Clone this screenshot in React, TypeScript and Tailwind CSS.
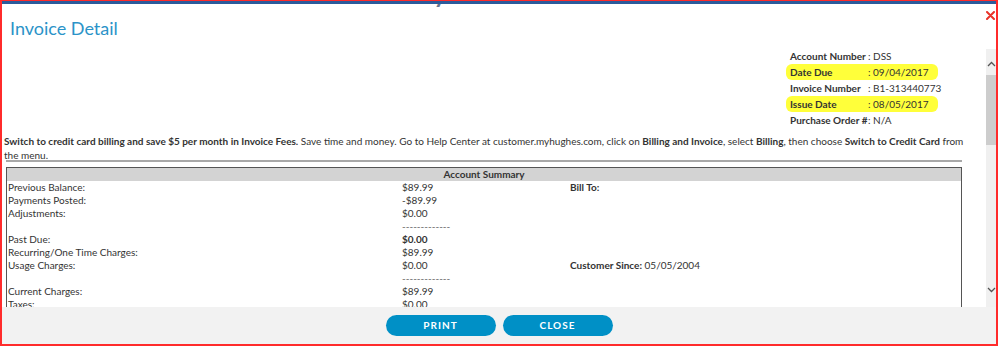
import React from "react";

const summaryRows = [
  { label: "Previous Balance:", value: "$89.99", extra: <span className="font-bold">Bill To:</span> },
  { label: "Payments Posted:", value: "-$89.99" },
  { label: "Adjustments:", value: "$0.00" },
  { label: "", value: "-------------", dash: true },
  { label: "Past Due:", value: "$0.00", bold: true },
  { label: "Recurring/One Time Charges:", value: "$89.99" },
  {
    label: "Usage Charges:",
    value: "$0.00",
    extra: (
      <span>
        <span className="font-bold">Customer Since:</span> 05/05/2004
      </span>
    ),
  },
  { label: "", value: "-------------", dash: true },
  { label: "Current Charges:", value: "$89.99" },
  { label: "Taxes:", value: "$0.00" },
];

const accountInfo = [
  { label: "Account Number", value: "DSS" },
  { label: "Date Due", value: "09/04/2017", mark: true },
  { label: "Invoice Number", value: "B1-313440773" },
  { label: "Issue Date", value: "08/05/2017", mark: true },
  { label: "Purchase Order #", value: "N/A" },
];

function App() {
  return (
    <div
      className="w-[998px] h-[346px] flex flex-col overflow-hidden bg-white border-t border-l-2 border-r-2 border-b-2 border-[#ff2b2b] text-[#333]"
      style={{ fontFamily: "Lato, 'Open Sans', sans-serif" }}
    >
      {/* page behind the dialog */}
      <div className="h-[3px] bg-[#2d5b9b] shrink-0" />
      <div className="h-[3px] shrink-0 overflow-hidden flex justify-center">
        <div className="text-[34px] leading-[34px] -mt-[30px] text-[#6a7490] ml-[-20px]">My Account</div>
      </div>

      {/* dialog header */}
      <div className="h-[42px] shrink-0 flex items-start justify-between">
        <h1 className="text-[18px] leading-none mt-[12px] ml-[8px] text-[#2b93c8]">Invoice Detail</h1>
        <button className="mt-[3px] mr-[1px] w-[10px] h-[10px] flex items-center justify-center">
          <svg width="9" height="9" viewBox="0 0 9 9">
            <path d="M1 1L8 8M8 1L1 8" stroke="#e8332a" strokeWidth="2" strokeLinecap="round" />
          </svg>
        </button>
      </div>

      {/* scrolling body */}
      <div className="flex-1 flex min-h-0">
        <div className="flex-1 overflow-hidden pl-[2px] pr-[22px] text-[10px]">
          <div className="ml-[786px] w-[160px] -mt-[1px]">
            {accountInfo.map((r) => (
              <div
                key={r.label}
                className={`flex h-[16px] items-center ${
                  r.mark ? "bg-[#ffff3a] rounded-[6px] -ml-[4px] pl-[4px] w-[152px]" : ""
                }`}
              >
                <span className="w-[78px] shrink-0 font-bold whitespace-nowrap">{r.label}</span>
                <span className="whitespace-nowrap">: {r.value}</span>
              </div>
            ))}
          </div>

          <p className="mt-[6px] leading-[14px]">
            <span className="font-bold">
              Switch to credit card billing and save $5 per month in Invoice Fees.
            </span>{" "}
            Save time and money. Go to Help Center at customer.myhughes.com, click on{" "}
            <span className="font-bold">Billing and Invoice</span>, select{" "}
            <span className="font-bold">Billing</span>, then choose{" "}
            <span className="font-bold">Switch to Credit Card</span> from the menu.
          </p>
          <div className="h-[2px] bg-[#a8a8a8] -mt-[2px] mx-[2px]" />

          <div className="mt-[5px] mx-[2px] border-t border-l border-r border-[#555]">
            <div className="bg-[#d3d3d3] h-[13px] leading-[13px] text-center font-bold">
              Account Summary
            </div>
            {summaryRows.map((r, i) => (
              <div key={i} className="flex h-[13px] leading-[13px]">
                <span className="w-[395px] pl-[1px] shrink-0 whitespace-nowrap">{r.label}</span>
                <span
                  className={`w-[168px] shrink-0 whitespace-nowrap ${r.bold ? "font-bold" : ""} ${
                    r.dash ? "text-[#666]" : ""
                  }`}
                >
                  {r.value}
                </span>
                <span className="whitespace-nowrap">{r.extra}</span>
              </div>
            ))}
          </div>
        </div>

        {/* scrollbar */}
        <div className="w-[10px] shrink-0 bg-[#f0f0f0] flex flex-col items-center">
          <svg width="9" height="6" viewBox="0 0 9 6" className="mt-[12px]">
            <path d="M1 5L4.5 1.5L8 5" fill="none" stroke="#555" strokeWidth="1.3" />
          </svg>
          <div className="w-full h-[70px] bg-[#cdcdcd] mt-[8px]" />
          <div className="flex-1" />
          <svg width="9" height="6" viewBox="0 0 9 6" className="mb-[14px]">
            <path d="M1 1L4.5 4.5L8 1" fill="none" stroke="#555" strokeWidth="1.3" />
          </svg>
        </div>
      </div>

      {/* footer */}
      <div className="h-[37px] shrink-0 bg-[#f2f2f2] flex items-center justify-center gap-[7px]">
        <button className="w-[110px] h-[21px] rounded-full bg-[#0090c6] text-white text-[10px] font-bold tracking-[1px]">
          PRINT
        </button>
        <button className="w-[110px] h-[21px] rounded-full bg-[#0090c6] text-white text-[10px] font-bold tracking-[1px]">
          CLOSE
        </button>
      </div>
    </div>
  );
}

export default App;
